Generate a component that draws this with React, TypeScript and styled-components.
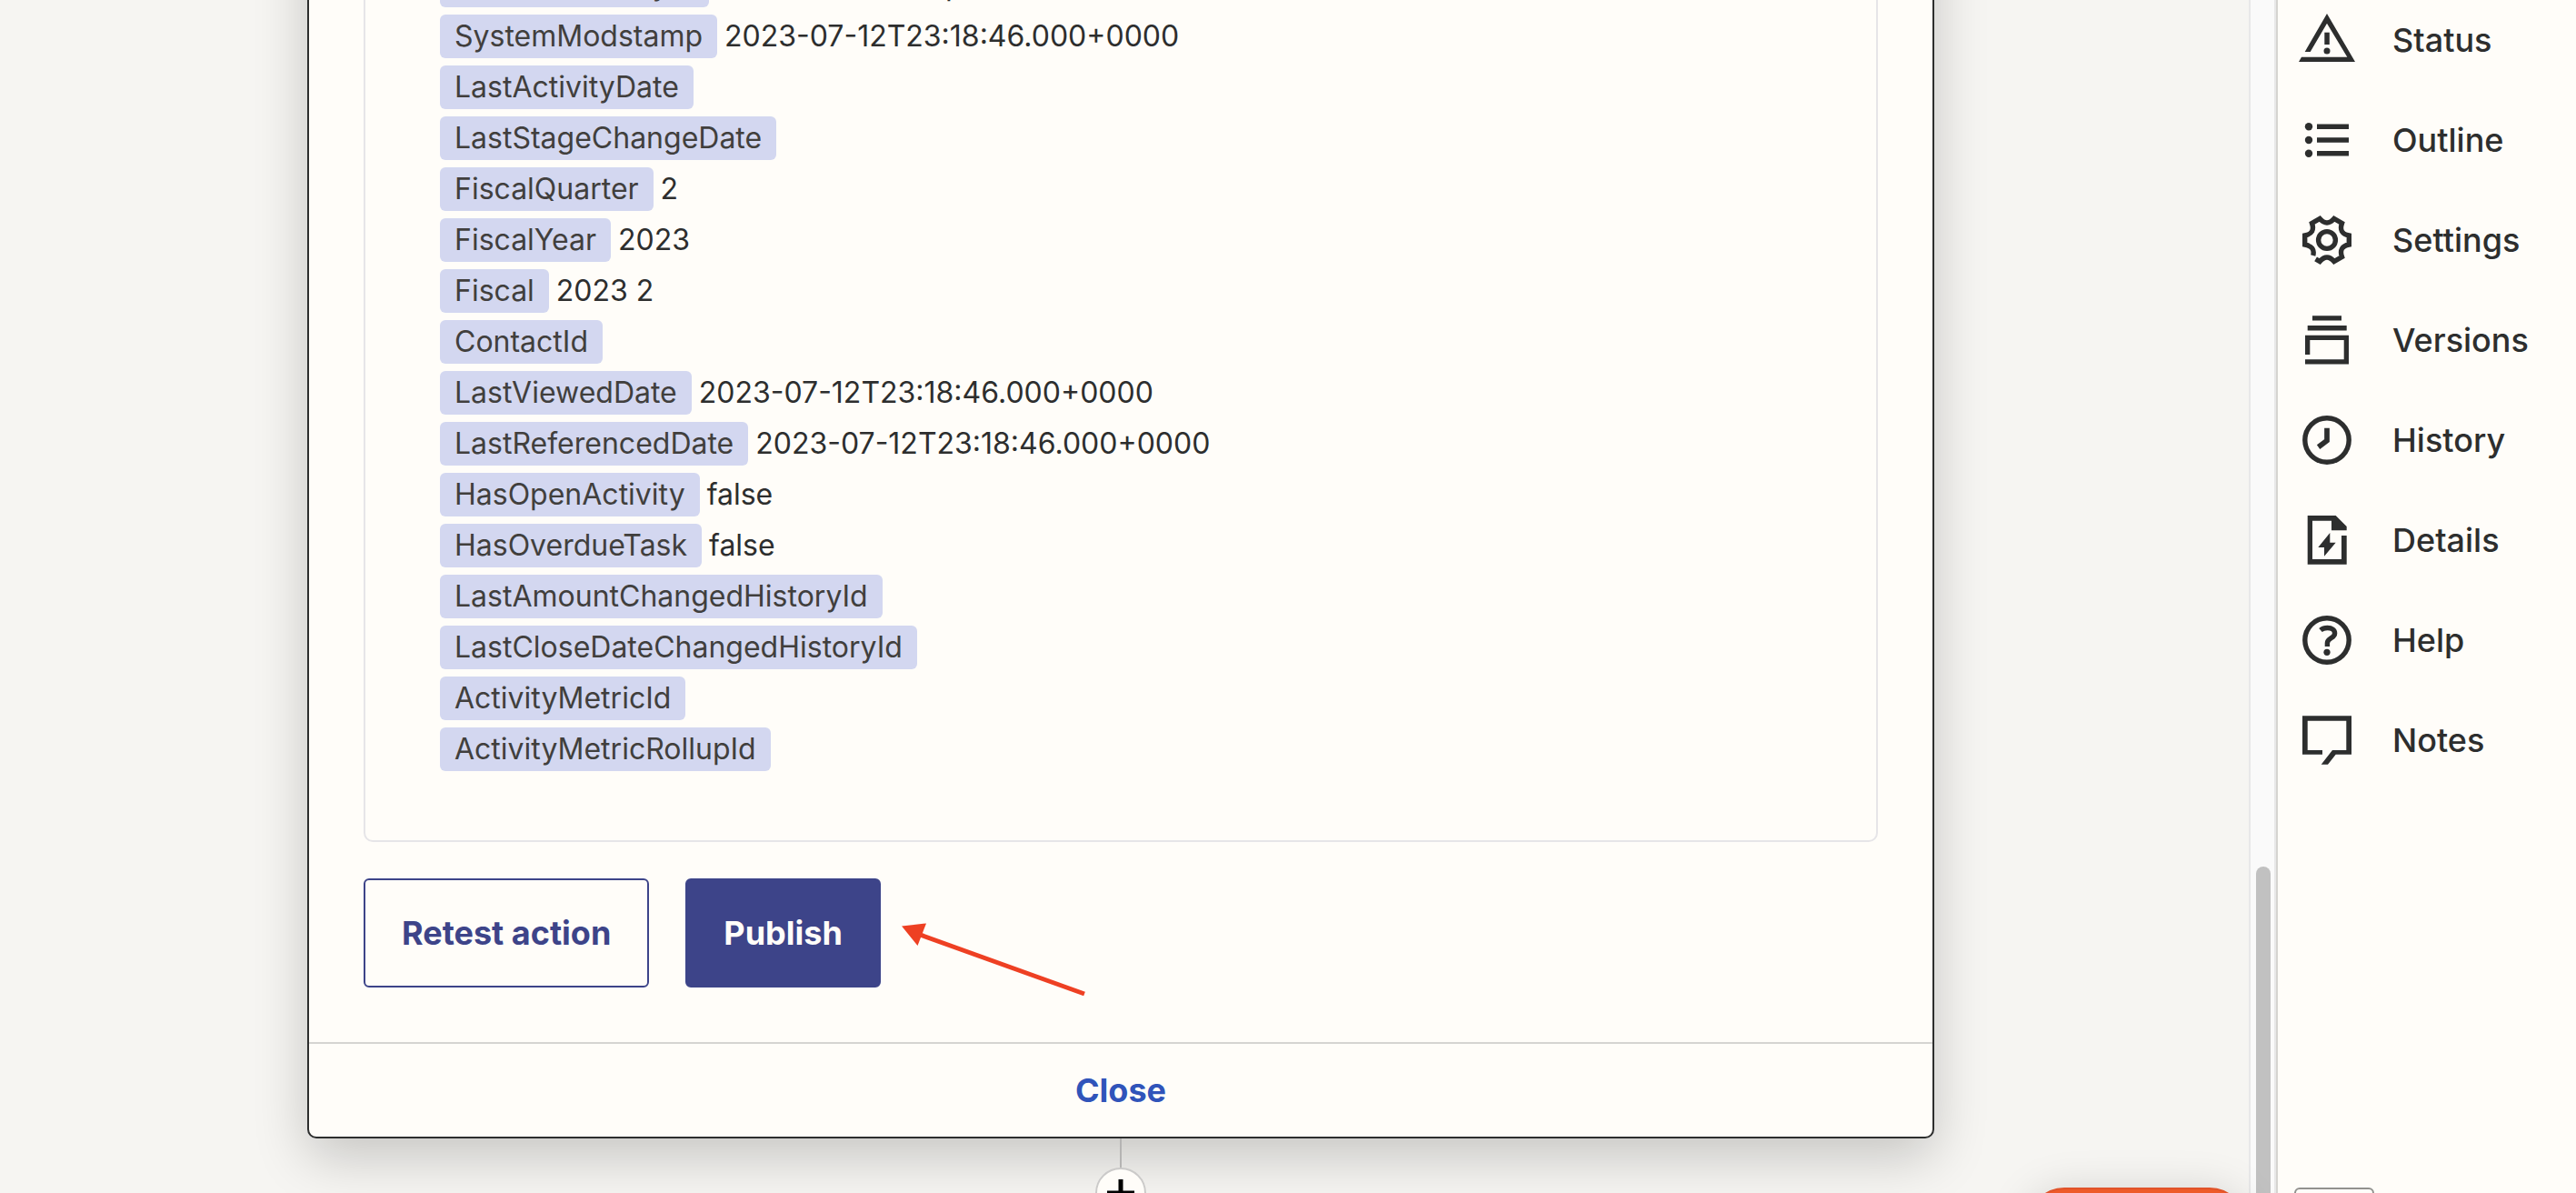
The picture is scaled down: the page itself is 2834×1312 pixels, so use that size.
import React from "react";
import styled, { createGlobalStyle } from "styled-components";

const GlobalStyle = createGlobalStyle`
  * { box-sizing: border-box; }
  body {
    margin: 0;
    background: #f6f5f2;
    color: #2d2e2e;
    font-family: Inter, "Liberation Sans", sans-serif;
    overflow: hidden;
  }
  button { font-family: inherit; cursor: pointer; }
`;

const Page = styled.div`
  display: flex;
  height: 100vh;
  overflow: hidden;
`;

const Canvas = styled.main`
  flex: 1;
  min-width: 0;
  display: flex;
  flex-direction: column;
  align-items: center;
  padding: 0 8px 0 0;
  overflow: hidden;
`;

const Step = styled.section`
  flex: none;
  width: 100%;
  max-width: 1790px;
  margin-top: -102px;
  background: #fffdf9;
  border: 2px solid #2d2e2e;
  border-radius: 10px;
  box-shadow: 0 20px 60px rgba(0, 0, 0, 0.2);
`;

const StepBody = styled.div`
  padding: 0 60px 60px;
`;

const ResultBox = styled.div`
  border: 2px solid #e6e5e8;
  border-radius: 10px;
  padding: 58px 82px 76px;
`;

const FieldList = styled.dl`
  margin: 0;
  display: flex;
  flex-direction: column;
  gap: 8px;
`;

const Field = styled.div`
  display: flex;
  gap: 8px;
  font-size: 32px;
  line-height: 48px;
`;

const FieldName = styled.dt`
  padding: 0 16px;
  border-radius: 6px;
  background: #d3d7f0;
  color: #413f3d;
`;

const FieldValue = styled.dd`
  margin: 0;
`;

const Actions = styled.div`
  display: flex;
  align-items: center;
  gap: 40px;
  margin-top: 40px;
`;

const ActionButton = styled.button<{ $primary?: boolean }>`
  height: 120px;
  padding: 0 40px;
  border: 2px solid #3d4489;
  border-radius: 6px;
  background: ${(p) => (p.$primary ? "#3d4489" : "#fffdf9")};
  color: ${(p) => (p.$primary ? "#fffdf9" : "#3d4489")};
  font-size: 36px;
  font-weight: 700;
  line-height: 48px;
`;

const ArrowSlot = styled.span`
  position: relative;
  width: 0;
  height: 120px;
`;

const Arrow = styled.svg`
  position: absolute;
  left: -18px;
  top: 40px;
  overflow: visible;
`;

const StepFooter = styled.footer`
  display: flex;
  justify-content: center;
  border-top: 2px solid #d5d4d1;
`;

const CloseButton = styled.button`
  height: 102px;
  padding: 0 40px;
  border: 0;
  background: none;
  color: #3054ba;
  font-size: 36px;
  font-weight: 700;
  line-height: 48px;
`;

const Connector = styled.div`
  flex: none;
  position: relative;
  width: 2px;
  height: 32px;
  background: #b5b4b3;
`;

const AddButton = styled.button`
  flex: none;
  position: relative;
  display: grid;
  place-items: center;
  width: 56px;
  height: 56px;
  padding: 0;
  border: 2px solid #cbcac9;
  border-radius: 50%;
  background: #fffdf9;
`;

const ScrollTrack = styled.div`
  flex: none;
  display: flex;
  flex-direction: column;
  justify-content: flex-end;
  width: 30px;
  padding-left: 6px;
  border: solid #e8e8e8;
  border-width: 0 2px;
  background: #fafafa;
`;

const ScrollThumb = styled.div`
  width: 16px;
  height: 27.4%;
  border-radius: 8px 8px 0 0;
  background: #c1c1c1;
`;

const SidePanel = styled.aside`
  flex: none;
  display: flex;
  flex-direction: column;
  justify-content: space-between;
  align-items: flex-start;
  width: 330px;
  padding: 14px 0 0 18px;
  border-left: 2px solid #d5d4d1;
  background: #fffdf9;
`;

const Menu = styled.nav`
  display: flex;
  flex-direction: column;
  gap: 50px;
  padding-left: 6px;
`;

const MenuItem = styled.button`
  display: flex;
  align-items: center;
  gap: 42px;
  height: 60px;
  padding: 0;
  border: 0;
  background: none;
  color: #2d2e2e;
  font-size: 36px;
  font-weight: 500;
  line-height: 48px;
`;

const Glyph = styled.svg`
  flex: none;
  width: 60px;
  height: 60px;
  overflow: visible;
  fill: currentColor;
`;

const PanelToggle = styled.button`
  width: 88px;
  height: 56px;
  margin-bottom: -50px;
  border: 2px solid #92918e;
  border-radius: 6px;
  background: #fffdf9;
`;

const ChatLauncher = styled.button`
  position: fixed;
  right: 363px;
  bottom: -74px;
  width: 240px;
  height: 80px;
  border: 2px solid #e0532a;
  border-radius: 40px;
  background: #ee5a29;
  box-shadow: 0 4px 48px rgba(0, 0, 0, 0.15);
`;

const fields: [string, string][] = [
  ["LastModifiedById", "0055f000008JXpLAAW"],
  ["SystemModstamp", "2023-07-12T23:18:46.000+0000"],
  ["LastActivityDate", ""],
  ["LastStageChangeDate", ""],
  ["FiscalQuarter", "2"],
  ["FiscalYear", "2023"],
  ["Fiscal", "2023 2"],
  ["ContactId", ""],
  ["LastViewedDate", "2023-07-12T23:18:46.000+0000"],
  ["LastReferencedDate", "2023-07-12T23:18:46.000+0000"],
  ["HasOpenActivity", "false"],
  ["HasOverdueTask", "false"],
  ["LastAmountChangedHistoryId", ""],
  ["LastCloseDateChangedHistoryId", ""],
  ["ActivityMetricId", ""],
  ["ActivityMetricRollupId", ""],
];

const ring = { fill: "none", stroke: "currentColor", strokeWidth: 5.4 };

const menu: { label: string; icon: React.ReactNode }[] = [
  {
    label: "Status",
    icon: (
      <>
        <path d="M30 1L61 54H-1L2 48.7H52.3L30 11.7L11.7 43H5.7Z" />
        <path d="M27.3 21.7h5.5v13.3h-5.5z" />
        <circle cx="30" cy="42" r="3.5" />
      </>
    ),
  },
  {
    label: "Outline",
    icon: (
      <>
        <circle cx="10" cy="15.3" r="4.2" />
        <circle cx="10" cy="30" r="4.2" />
        <circle cx="10" cy="44.7" r="4.2" />
        <path d="M19 12.6h35v5.4H19zM19 27.3h35v5.4H19zM19 42h35v5.4H19z" />
      </>
    ),
  },
  {
    label: "Settings",
    icon: (
      <g transform="translate(30 30)" {...ring}>
        <circle r="9.4" />
        <path d="M-12.4 20.8L-7.8 23.5Q0 14.5 7.8 23.5L16.5 18.5Q12.6 7.25 24.3 5V-5Q12.6 -7.25 16.5 -18.5L7.8 -23.5Q0 -14.5 -7.8 -23.5L-16.5 -18.5Q-12.6 -7.25 -24.3 -5V5Q-12.6 7.25 -15.3 17" />
      </g>
    ),
  },
  {
    label: "Versions",
    icon: (
      <path d="M14 3.2h32v5.4H14zM8.7 14h43v5.4h-43zM6 24.7H54V56.6H6V51.2H48.7V30H11.3V46H6Z" />
    ),
  },
  {
    label: "History",
    icon: (
      <g {...ring}>
        <circle cx="30" cy="30" r="24.2" />
        <path d="M30 16.7V30.6L20.6 37.6" strokeWidth="5.7" />
      </g>
    ),
  },
  {
    label: "Details",
    icon: (
      <path d="M8.7 3H39.7L51.7 15V19.3H35V8.7H14V51H46V25H51.7V56.7H8.7ZM33.3 22L20.3 38H27V47.7L39.7 32.7H33.3Z" />
    ),
  },
  {
    label: "Help",
    icon: (
      <>
        <g {...ring}>
          <circle cx="30" cy="30" r="24.2" />
          <path d="M23 19C25 17.3 27.5 16.5 30.5 16.5C35.5 16.5 38.6 18.8 38.6 22.4C38.6 28 30.4 27.6 30.4 33.2V37" />
        </g>
        <circle cx="30" cy="43.3" r="3.6" />
      </>
    ),
  },
  {
    label: "Notes",
    icon: (
      <path d="M25 41H8.7V8.7H51.3V41H36L23.7 56.7H31L39.7 45.7H57V3.3H3V45.7H25Z" />
    ),
  },
];

export default function App() {
  return (
    <Page>
      <GlobalStyle />
      <Canvas>
        <Step>
          <StepBody>
            <ResultBox>
              <FieldList>
                {fields.map(([name, value]) => (
                  <Field key={name}>
                    <FieldName>{name}</FieldName>
                    <FieldValue>{value}</FieldValue>
                  </Field>
                ))}
              </FieldList>
            </ResultBox>
            <Actions>
              <ActionButton type="button">Retest action</ActionButton>
              <ActionButton type="button" $primary>
                Publish
              </ActionButton>
              <ArrowSlot>
                <Arrow width="204" height="90" viewBox="0 0 204 90" aria-hidden="true">
                  <path d="M20 21.500L202 87" stroke="#ee4023" strokeWidth="5" fill="none" />
                  <path d="M1 12.500L28 9.500L18.500 34Z" fill="#ee4023" />
                </Arrow>
              </ArrowSlot>
            </Actions>
          </StepBody>
          <StepFooter>
            <CloseButton type="button">Close</CloseButton>
          </StepFooter>
        </Step>
        <Connector />
        <AddButton type="button" aria-label="Add step">
          <svg width="30" height="30" viewBox="0 0 30 30" aria-hidden="true">
            <path d="M15 0V30M0 15H30" stroke="#000" strokeWidth="5" />
          </svg>
        </AddButton>
      </Canvas>
      <ScrollTrack>
        <ScrollThumb />
      </ScrollTrack>
      <SidePanel>
        <Menu>
          {menu.map(({ label, icon }) => (
            <MenuItem type="button" key={label}>
              <Glyph viewBox="0 0 60 60" aria-hidden="true">
                {icon}
              </Glyph>
              {label}
            </MenuItem>
          ))}
        </Menu>
        <PanelToggle type="button" aria-label="Toggle panel" />
      </SidePanel>
      <ChatLauncher type="button" aria-label="Open chat" />
    </Page>
  );
}
